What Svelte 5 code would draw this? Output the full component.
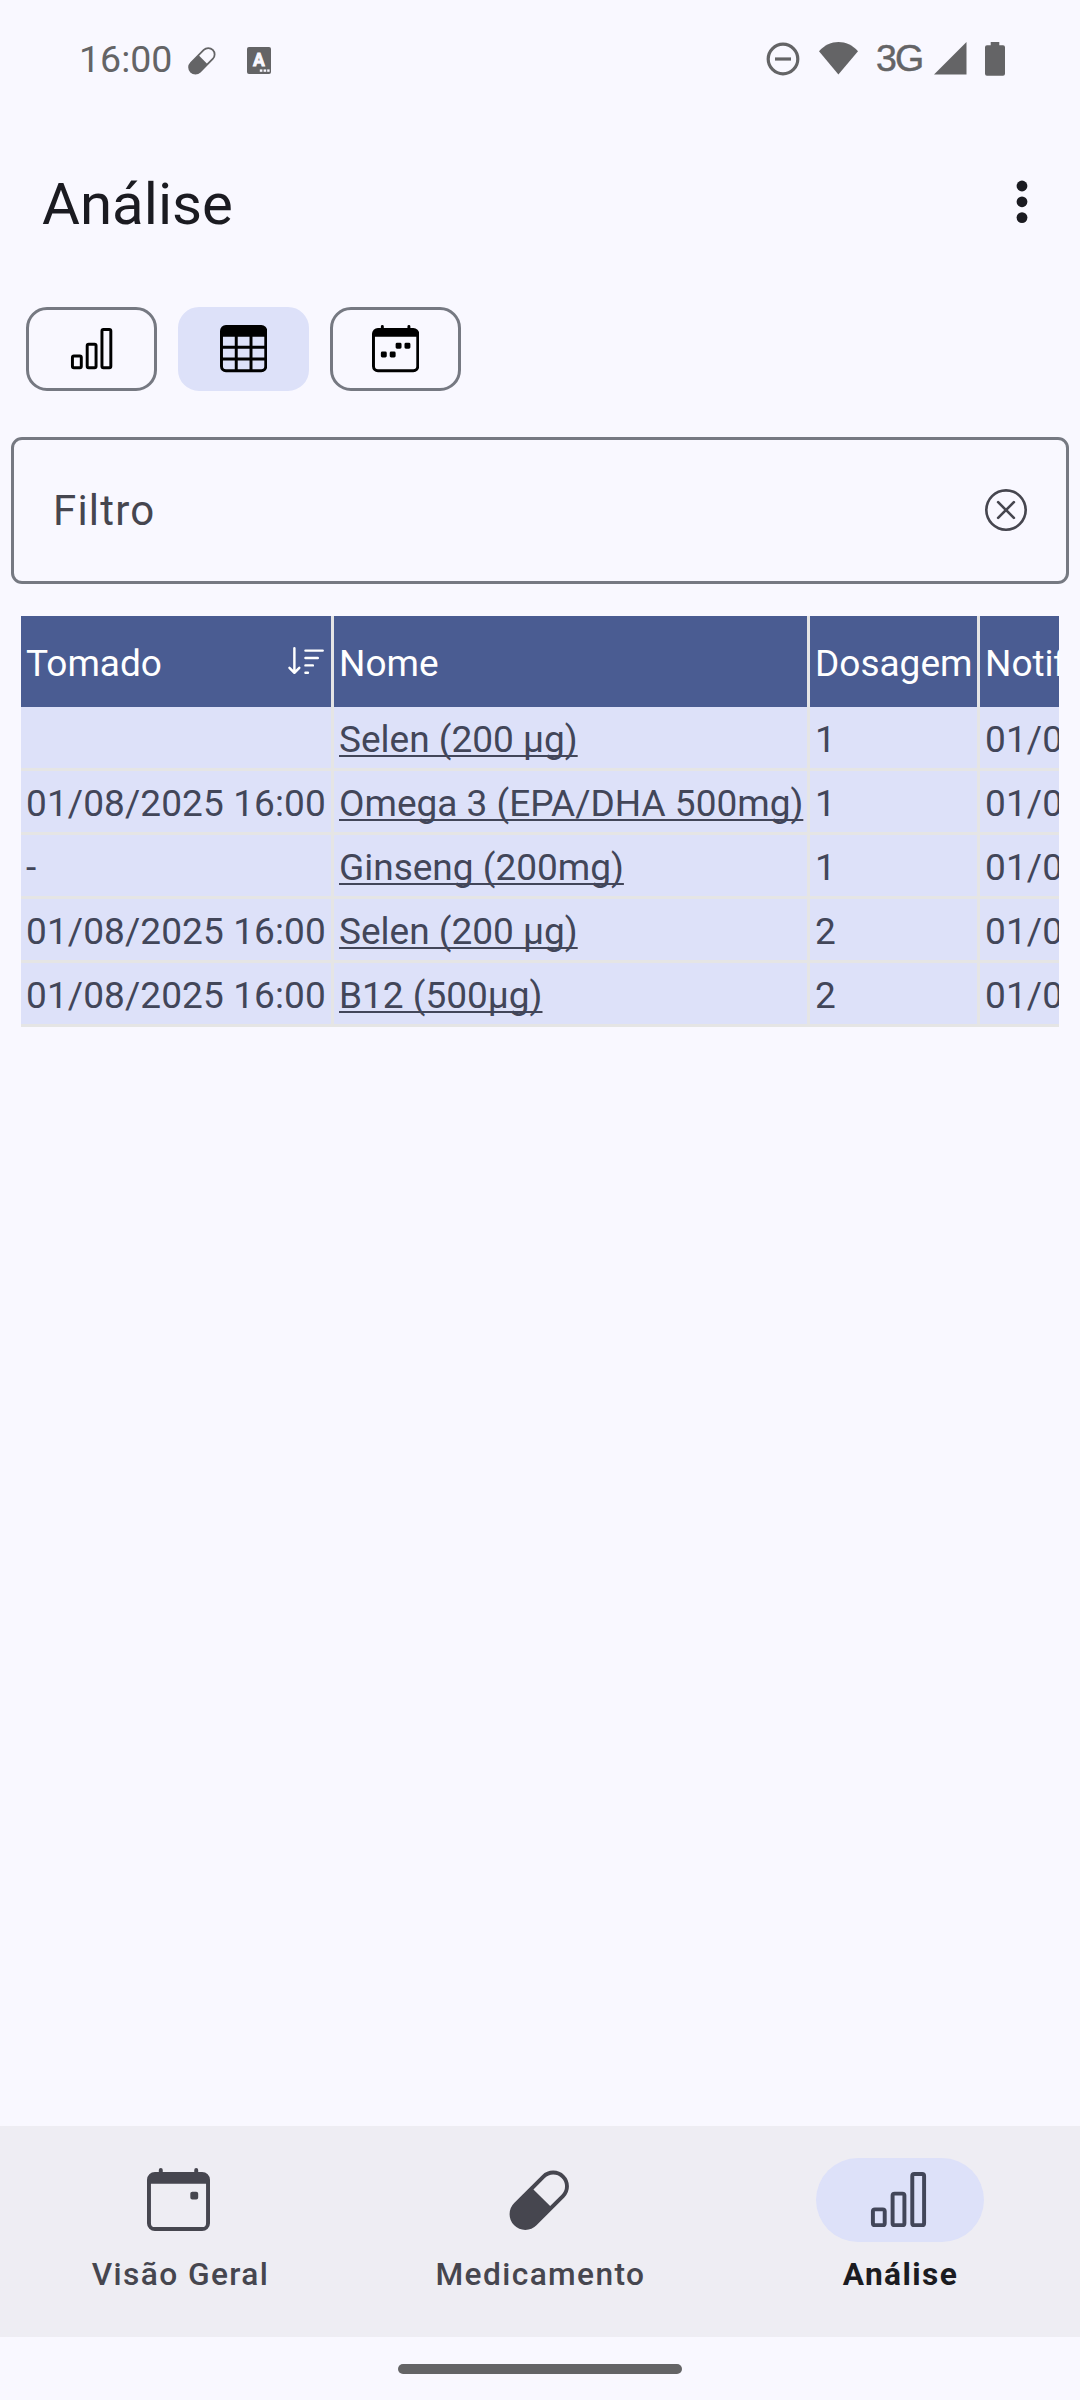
<script>
  const icons = {
    bars: 'M4 11H2v3h2zm5-4H7v7h2zm5-5v12h-2V2zm-2-1a1 1 0 0 0-1 1v12a1 1 0 0 0 1 1h2a1 1 0 0 0 1-1V2a1 1 0 0 0-1-1zM6 7a1 1 0 0 1 1-1h2a1 1 0 0 1 1 1v7a1 1 0 0 1-1 1H7a1 1 0 0 1-1-1zm-5 4a1 1 0 0 1 1-1h2a1 1 0 0 1 1 1v3a1 1 0 0 1-1 1H2a1 1 0 0 1-1-1z',
    table: 'M0 2a2 2 0 0 1 2-2h12a2 2 0 0 1 2 2v12a2 2 0 0 1-2 2H2a2 2 0 0 1-2-2zm15 2h-4v3h4zm0 4h-4v3h4zm0 4h-4v3h3a1 1 0 0 0 1-1zm-5 3v-3H6v3zm-5 0v-3H1v2a1 1 0 0 0 1 1zm-4-4h4V8H1zm0-4h4V4H1zm5-3v3h4V4zm4 4H6v3h4z',
    week: 'M11 6.5a.5.5 0 0 1 .5-.5h1a.5.5 0 0 1 .5.5v1a.5.5 0 0 1-.5.5h-1a.5.5 0 0 1-.5-.5zm-3 0a.5.5 0 0 1 .5-.5h1a.5.5 0 0 1 .5.5v1a.5.5 0 0 1-.5.5h-1a.5.5 0 0 1-.5-.5zm-5 3a.5.5 0 0 1 .5-.5h1a.5.5 0 0 1 .5.5v1a.5.5 0 0 1-.5.5h-1a.5.5 0 0 1-.5-.5zm3 0a.5.5 0 0 1 .5-.5h1a.5.5 0 0 1 .5.5v1a.5.5 0 0 1-.5.5h-1a.5.5 0 0 1-.5-.5zM3.5 0a.5.5 0 0 1 .5.5V1h8V.5a.5.5 0 0 1 1 0V1h1a2 2 0 0 1 2 2v11a2 2 0 0 1-2 2H2a2 2 0 0 1-2-2V3a2 2 0 0 1 2-2h1V.5a.5.5 0 0 1 .5-.5M1 4v10a1 1 0 0 0 1 1h12a1 1 0 0 0 1-1V4z',
    event: 'M11 6.5a.5.5 0 0 1 .5-.5h1a.5.5 0 0 1 .5.5v1a.5.5 0 0 1-.5.5h-1a.5.5 0 0 1-.5-.5zM3.5 0a.5.5 0 0 1 .5.5V1h8V.5a.5.5 0 0 1 1 0V1h1a2 2 0 0 1 2 2v11a2 2 0 0 1-2 2H2a2 2 0 0 1-2-2V3a2 2 0 0 1 2-2h1V.5a.5.5 0 0 1 .5-.5M1 4v10a1 1 0 0 0 1 1h12a1 1 0 0 0 1-1V4z',
    capsule: 'M1.828 8.9 8.9 1.827a4 4 0 1 1 5.657 5.657l-7.07 7.071A4 4 0 1 1 1.827 8.9Zm9.128.771 2.893-2.893a3 3 0 1 0-4.243-4.242L6.713 5.429z',
    clear: 'M8 15A7 7 0 1 1 8 1a7 7 0 0 1 0 14m0 1A8 8 0 1 0 8 0a8 8 0 0 0 0 16M4.646 4.646a.5.5 0 0 1 .708 0L8 7.293l2.646-2.647a.5.5 0 0 1 .708.708L8.707 8l2.647 2.646a.5.5 0 0 1-.708.708L8 8.707l-2.646 2.647a.5.5 0 0 1-.708-.708L7.293 8 4.646 5.354a.5.5 0 0 1 0-.708',
    sort: 'M3.5 2.5a.5.5 0 0 0-1 0v8.793l-1.146-1.147a.5.5 0 0 0-.708.708l2 1.999.007.007a.497.497 0 0 0 .7-.006l2-2a.5.5 0 0 0-.707-.708L3.5 11.293zm3.5 1a.5.5 0 0 1 .5-.5h7a.5.5 0 0 1 0 1h-7a.5.5 0 0 1-.5-.5M7.5 6a.5.5 0 0 0 0 1h5a.5.5 0 0 0 0-1zm0 3a.5.5 0 0 0 0 1h3a.5.5 0 0 0 0-1zm0 3a.5.5 0 0 0 0 1h1a.5.5 0 0 0 0-1z'
  };

  const views = [
    { icon: 'bars', active: false },
    { icon: 'table', active: true },
    { icon: 'week', active: false }
  ];

  const stamp = '01/08/2025 16:00';
  const rows = [
    { taken: '', name: 'Selen (200 µg)', dose: '1' },
    { taken: stamp, name: 'Omega 3 (EPA/DHA 500mg)', dose: '1' },
    { taken: '-', name: 'Ginseng (200mg)', dose: '1' },
    { taken: stamp, name: 'Selen (200 µg)', dose: '2' },
    { taken: stamp, name: 'B12 (500µg)', dose: '2' }
  ];

  const tabs = [
    { icon: 'event', label: 'Visão Geral', active: false },
    { icon: 'capsule', label: 'Medicamento', active: false },
    { icon: 'bars', label: 'Análise', active: true }
  ];
</script>

{#snippet icon(name)}
  <svg class="icon" viewBox="0 0 16 16"><path fill-rule="evenodd" d={icons[name]} /></svg>
{/snippet}

<div class="screen">
  <div class="status">
    <span class="clock">16:00</span>
    <span class="pill">{@render icon('capsule')}</span>
    <svg class="badge" width="24" height="27" viewBox="0 0 24 27">
      <rect width="24" height="27" rx="2" />
      <text x="12" y="19">A</text>
      <g class="dots">
        <rect x="12.8" y="22.4" width="2.6" height="2.4" />
        <rect x="16.6" y="22.4" width="2.6" height="2.4" />
        <rect x="20.2" y="22.4" width="2.4" height="2.4" />
      </g>
    </svg>
    <svg class="dnd" width="34" height="34" viewBox="0 0 34 34">
      <circle cx="17" cy="17" r="14.8" />
      <path d="M9 17h16" />
    </svg>
    <svg class="wifi" width="39" height="33" viewBox="0 0 39 33">
      <path d="M0 9.3C5.5 3 12.5 0 19.5 0S33.5 3 39 9.3L19.4 32.5z" />
    </svg>
    <span class="network">3G</span>
    <svg class="signal" width="33" height="33" viewBox="0 0 33 33"><path d="M32.5 0v32.5H0z" /></svg>
    <svg class="battery" width="20" height="34" viewBox="0 0 20 34">
      <path d="M5.7 0h8.600v3.300H18a2 2 0 0 1 2 2v26.400a2 2 0 0 1-2 2H2a2 2 0 0 1-2-2V5.300a2 2 0 0 1 2-2h3.700z" />
    </svg>
  </div>

  <header>
    <h1>Análise</h1>
    <svg class="more" width="12" height="44" viewBox="0 0 12 44">
      <circle cx="6" cy="6" r="5.4" /><circle cx="6" cy="21.8" r="5.4" /><circle cx="6" cy="37.6" r="5.4" />
    </svg>
  </header>

  <div class="views">
    {#each views as view}
      <button class:active={view.active}>{@render icon(view.icon)}</button>
    {/each}
  </div>

  <div class="filter">
    <span>Filtro</span>
    {@render icon('clear')}
  </div>

  <div class="grid">
    <div class="row head">
      <div class="cell">Tomado {@render icon('sort')}</div>
      <div class="cell">Nome</div>
      <div class="cell">Dosagem</div>
      <div class="cell">Notificado</div>
    </div>
    {#each rows as row}
      <div class="row">
        <div class="cell date">{row.taken}</div>
        <div class="cell"><span class="link">{row.name}</span></div>
        <div class="cell">{row.dose}</div>
        <div class="cell date">{stamp}</div>
      </div>
    {/each}
  </div>

  <nav>
    {#each tabs as tab}
      <div class="tab" class:active={tab.active}>
        <span class="indicator">{@render icon(tab.icon)}</span>
        <span class="label">{tab.label}</span>
      </div>
    {/each}
  </nav>
  <div class="gesture"><span></span></div>
</div>

<style>
  :global(body) {
    background: #f9f8ff;
  }
  .screen {
    display: flex;
    flex-direction: column;
    box-sizing: border-box;
    width: 1080px;
    height: 2400px;
    overflow: hidden;
    background: #f9f8ff;
    color: #1b1b21;
    font-family: Roboto, sans-serif;
  }
  svg {
    display: block;
    flex: none;
  }
  .icon {
    fill: currentColor;
  }

  .status {
    display: flex;
    align-items: flex-start;
    height: 163px;
    padding: 42px 75px 0 79px;
    box-sizing: border-box;
    color: #646466;
    fill: #646466;
  }
  .clock {
    width: 108px;
    font-size: 37.5px;
    line-height: 34px;
  }
  .pill {
    margin: 3.5px 31px 0 0;
  }
  .pill .icon {
    width: 29px;
    height: 29px;
  }
  .badge {
    margin: 4.5px auto 0 0;
  }
  .badge text {
    fill: #f9f8ff;
    stroke: #f9f8ff;
    stroke-width: 0.8;
    font-size: 17.5px;
    font-weight: 700;
    text-anchor: middle;
  }
  .dots {
    fill: #f9f8ff;
  }
  .dnd {
    margin-right: 19px;
    fill: none;
    stroke: #646466;
    stroke-width: 3.2;
  }
  .wifi {
    margin-right: 18px;
  }
  .network {
    width: 57.5px;
    font-family: 'Liberation Sans', sans-serif;
    font-size: 37.5px;
    line-height: 33px;
    letter-spacing: -1.8px;
    -webkit-text-stroke: 0.5px #646466;
  }
  .signal {
    margin-right: 18.5px;
  }

  header {
    display: flex;
    justify-content: space-between;
    height: 144px;
    padding: 0 52px 0 42px;
  }
  h1 {
    margin: 0;
    font-size: 58.2px;
    line-height: 83px;
    font-weight: 400;
  }
  .more {
    margin-top: 16.5px;
    fill: #1b1b21;
  }

  .views {
    display: flex;
    gap: 21px;
    height: 84px;
    padding-left: 26px;
  }
  button {
    display: flex;
    align-items: center;
    justify-content: center;
    box-sizing: border-box;
    width: 131px;
    height: 84px;
    padding: 0;
    border: 3px solid #767982;
    border-radius: 21px;
    background: none;
    color: #000;
  }
  button.active {
    border-color: #dde1f9;
    background: #dde1f9;
  }
  button .icon {
    width: 47.25px;
    height: 47.25px;
  }

  .filter {
    display: flex;
    align-items: center;
    justify-content: space-between;
    box-sizing: border-box;
    height: 147px;
    margin: 46px 11px 32px;
    padding: 0 39px;
    border: 3px solid #767982;
    border-radius: 11px;
    color: #46464f;
    font-size: 42px;
    line-height: 60px;
    letter-spacing: 1.2px;
  }
  .filter .icon {
    width: 42px;
    height: 42px;
    margin-bottom: 1px;
  }

  .grid {
    width: 1038px;
    margin-left: 21px;
    overflow: hidden;
    font-size: 37px;
  }
  .row {
    display: grid;
    grid-template-columns: 313px 476px 170px 313px;
    height: 61px;
    border-bottom: 3px solid #e5e5e5;
    background: #dde1f9;
    color: #424659;
  }
  .row.head {
    height: 91px;
    border-bottom: 0;
    background: #4a5c92;
    color: #fff;
  }
  .cell {
    display: flex;
    align-items: center;
    justify-content: space-between;
    padding: 3px 5px 0;
    border-right: 3px solid #e5e5e5;
    white-space: nowrap;
  }
  .date {
    letter-spacing: 0.1px;
  }
  .cell .icon {
    width: 39.4px;
    height: 39.4px;
    margin-top: -3px;
  }
  .link {
    text-decoration: underline;
    text-decoration-thickness: 2px;
    text-decoration-skip-ink: none;
    text-underline-offset: 3px;
  }

  nav {
    display: flex;
    box-sizing: border-box;
    height: 211px;
    margin-top: auto;
    padding-top: 32px;
    background: #eeedf3;
    color: #46464f;
  }
  .tab {
    display: flex;
    flex: 1;
    flex-direction: column;
    align-items: center;
  }
  .indicator {
    display: flex;
    align-items: center;
    justify-content: center;
    box-sizing: border-box;
    width: 168px;
    height: 84px;
    padding: 0 3px 1px 0;
    border-radius: 42px;
  }
  .indicator .icon {
    width: 63px;
    height: 63px;
  }
  .label {
    margin-top: 12px;
    padding-left: 1px;
    font-size: 31.7px;
    line-height: 42px;
    font-weight: 500;
    letter-spacing: 1.4px;
  }
  .active .indicator {
    background: #dde1f9;
    color: #424659;
  }
  .active .label {
    color: #1b1b21;
    font-weight: 700;
  }

  .gesture {
    display: flex;
    justify-content: center;
    height: 63px;
    padding-top: 27px;
    box-sizing: border-box;
  }
  .gesture span {
    width: 284px;
    height: 10px;
    border-radius: 5px;
    background: #646466;
  }
</style>
